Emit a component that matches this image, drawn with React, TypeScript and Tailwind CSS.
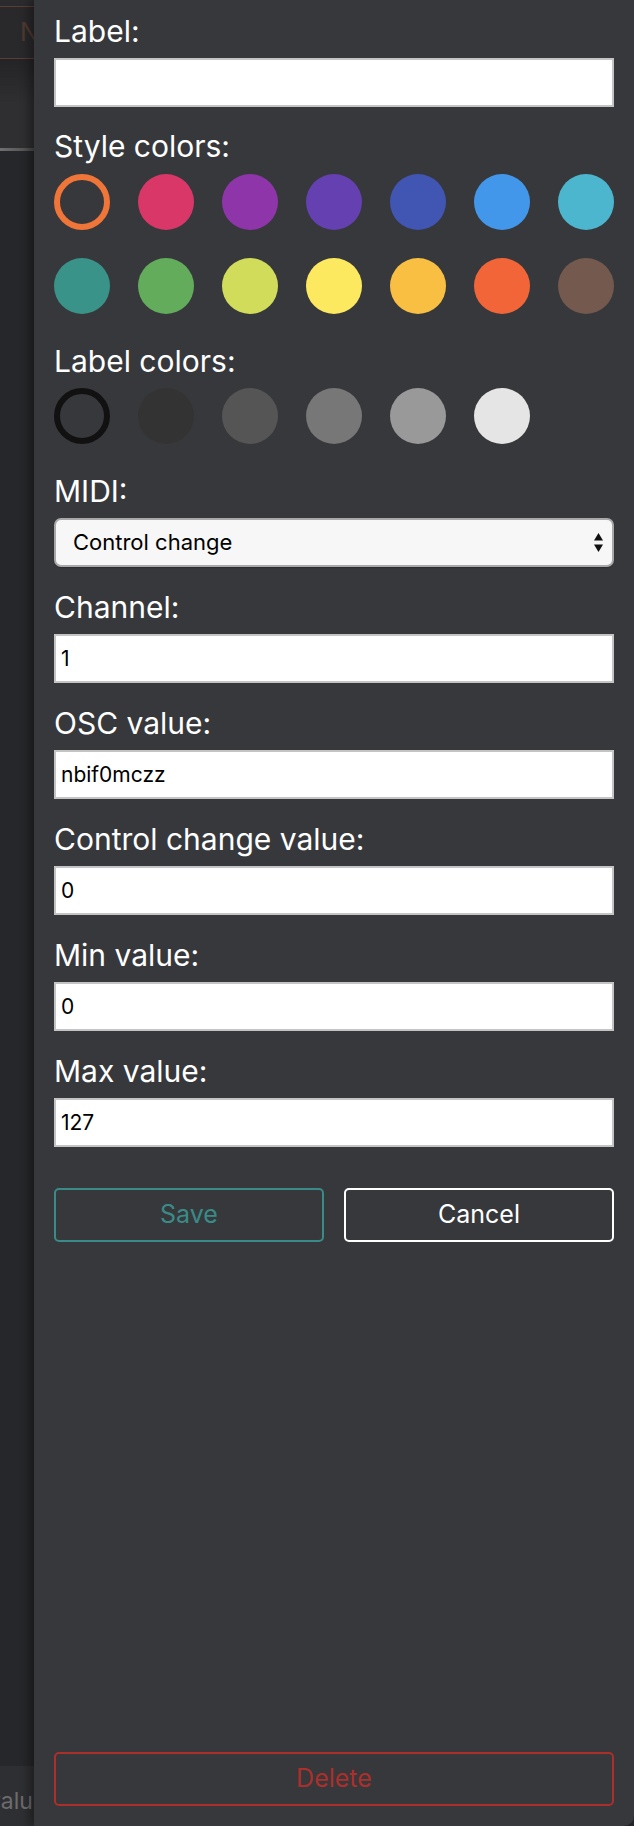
const styleColors = [
  '#f07538',
  '#d93768',
  '#8e35a9',
  '#6440b0',
  '#4155b3',
  '#4397ea',
  '#4db6cf',
  '#3a9389',
  '#63ac5c',
  '#d1dc5a',
  '#fde95f',
  '#f8bf43',
  '#f26538',
  '#74594e',
];

const labelColors = ['#111111', '#333333', '#555555', '#777777', '#999999', '#e5e5e5'];

function Swatch({ color, selected }: { color: string; selected: boolean }) {
  if (selected) {
    return <div className="h-[56px] w-[56px] rounded-full border-[6px]" style={{ borderColor: color }} />;
  }
  return <div className="h-[56px] w-[56px] rounded-full" style={{ backgroundColor: color }} />;
}

function FieldLabel({ text, className = '' }: { text: string; className?: string }) {
  return <label className={`block h-[36px] text-[30px] leading-[36px] text-white ${className}`}>{text}</label>;
}

function TextField({ label, value }: { label: string; value: string }) {
  return (
    <>
      <FieldLabel text={label} className="mt-[22px]" />
      <input
        readOnly
        value={value}
        className="mt-[9px] h-[49px] w-full border-2 border-[#c4c4c4] bg-white px-[5px] text-[21px] text-black outline-none"
      />
    </>
  );
}

function BackdropStrip() {
  return (
    <div className="flex w-[34px] shrink-0 flex-col overflow-hidden">
      <div className="h-[6px] bg-[#2b2b2e]" />
      <div className="h-[1px] bg-[#5c3d33]" />
      <div className="flex h-[51px] items-center whitespace-nowrap bg-[#29292c] pl-[20px] text-[25px] text-[#50392f]">
        N
      </div>
      <div className="h-[1px] bg-[#5c3d33]" />
      <div className="h-[89px] bg-gradient-to-b from-[#242427] via-[#2f2f32] to-[#2f2f32]" />
      <div className="h-[3px] bg-gradient-to-r from-[#707070] to-[#4a4a4a]" />
      <div className="flex-1 bg-[#26272a]" />
      <div className="flex h-[60px] items-center whitespace-nowrap bg-[#2e2f32] pt-[10px] text-[23px] text-[#6c6c6c]">
        <span className="-ml-[12px]">value</span>
      </div>
    </div>
  );
}

export default function App() {
  return (
    <div className="flex h-[1826px] w-[634px] overflow-hidden bg-[#252629] font-['Inter',sans-serif]">
      <BackdropStrip />
      <div className="relative flex flex-1 flex-col rounded-br-[10px] bg-[#37383c] px-[20px] pb-[20px] pt-[13px] shadow-[-5px_0_10px_rgba(0,0,0,0.35)]">
        <FieldLabel text="Label:" />
        <input
          readOnly
          value=""
          className="mt-[9px] h-[49px] w-full border-2 border-[#c4c4c4] bg-white px-[5px] text-[21px] text-black outline-none"
        />

        <FieldLabel text="Style colors:" className="mt-[21px]" />
        <div className="mt-[10px] flex justify-between">
          {styleColors.slice(0, 7).map((c, i) => (
            <Swatch key={c} color={c} selected={i === 0} />
          ))}
        </div>
        <div className="mt-[28px] flex justify-between">
          {styleColors.slice(7).map((c) => (
            <Swatch key={c} color={c} selected={false} />
          ))}
        </div>

        <FieldLabel text="Label colors:" className="mt-[29px]" />
        <div className="mt-[9px] flex gap-[28px]">
          {labelColors.map((c, i) => (
            <Swatch key={c} color={c} selected={i === 0} />
          ))}
        </div>

        <FieldLabel text="MIDI:" className="mt-[29px]" />
        <div className="relative mt-[9px] h-[49px]">
          <select
            defaultValue="cc"
            className="h-full w-full appearance-none rounded-[7px] border-2 border-[#a8a8a8] bg-[#f7f7f7] pl-[17px] text-[22px] text-black shadow-[0_1px_1px_rgba(0,0,0,0.2)] outline-none"
          >
            <option value="note">Note</option>
            <option value="cc">Control change</option>
          </select>
          <svg
            className="pointer-events-none absolute right-[11px] top-[15px]"
            width="9"
            height="19"
            viewBox="0 0 9 19"
          >
            <path d="M4.5 0 L9 7.5 L0 7.5 Z" fill="#111" />
            <path d="M0 11.5 L9 11.5 L4.5 19 Z" fill="#111" />
          </svg>
        </div>

        <TextField label="Channel:" value="1" />
        <TextField label="OSC value:" value="nbif0mczz" />
        <TextField label="Control change value:" value="0" />
        <TextField label="Min value:" value="0" />
        <TextField label="Max value:" value="127" />

        <div className="mt-[41px] flex gap-[20px]">
          <button className="h-[54px] flex-1 rounded-[5px] border-2 border-[#3a8b87] text-[25px] text-[#3a8b87]">
            Save
          </button>
          <button className="h-[54px] flex-1 rounded-[5px] border-2 border-white text-[25px] text-white">
            Cancel
          </button>
        </div>

        <div className="flex-1" />

        <button className="h-[54px] w-full rounded-[5px] border-2 border-[#ab2f2b] text-[25px] text-[#ab2f2b]">
          Delete
        </button>
      </div>
    </div>
  );
}
